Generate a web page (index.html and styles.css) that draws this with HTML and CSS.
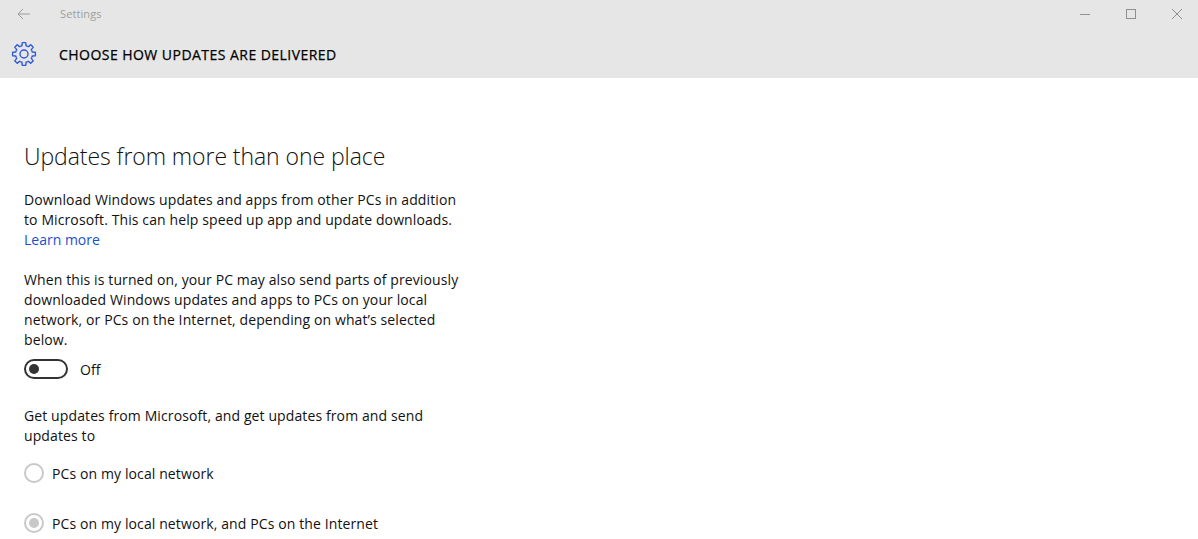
FILE: index.html
```html
<!DOCTYPE html>
<html lang="en">
<head>
<meta charset="utf-8">
<title>Settings</title>
<link rel="stylesheet" href="styles.css">
</head>
<body>
<header class="chrome">
  <div class="titlebar">
    <svg class="back" width="14" height="12" viewBox="0 0 14 12"><path d="M6 1 1 6l5 5M1 6h12" fill="none" stroke="#9a9a9a" stroke-width="1"/></svg>
    <span class="app">Settings</span>
    <div class="winctl">
      <svg width="12" height="12" viewBox="0 0 12 12"><path d="M1 6.5h10" stroke="#8f8f8f" stroke-width="1"/></svg>
      <svg width="12" height="12" viewBox="0 0 12 12"><rect x="1.5" y="1.5" width="9" height="9" fill="none" stroke="#8f8f8f"/></svg>
      <svg width="12" height="12" viewBox="0 0 12 12"><path d="M1 1l10 10M11 1 1 11" stroke="#8f8f8f" stroke-width="1"/></svg>
    </div>
  </div>
  <div class="pagebar">
    <svg class="gear" width="26" height="26" viewBox="-1 -1 26 26">
      <defs><path id="tooth" d="M8.75 4.15 9.94 3.76 10.2 .9Q10.25 .6 10.6 .6H13.4Q13.75 .6 13.8 .9L14.06 3.76 15.25 4.15"/></defs>
      <g fill="none" stroke="#2f5bd7" stroke-width="1.4" stroke-linejoin="round">
        <use href="#tooth"/>
        <use href="#tooth" transform="rotate(45 12 12)"/>
        <use href="#tooth" transform="rotate(90 12 12)"/>
        <use href="#tooth" transform="rotate(135 12 12)"/>
        <use href="#tooth" transform="rotate(180 12 12)"/>
        <use href="#tooth" transform="rotate(225 12 12)"/>
        <use href="#tooth" transform="rotate(270 12 12)"/>
        <use href="#tooth" transform="rotate(315 12 12)"/>
        <circle cx="12" cy="12" r="4"/>
      </g>
    </svg>
    <h1 class="pagetitle">CHOOSE HOW UPDATES ARE DELIVERED</h1>
  </div>
</header>
<main class="content">
  <h2 class="heading">Updates from more than one place</h2>
  <p class="para">Download Windows updates and apps from other PCs in addition<br>to Microsoft. This can help speed up app and update downloads.<br><a class="link" href="#">Learn more</a></p>
  <p class="para second">When this is turned on, your PC may also send parts of previously<br>downloaded Windows updates and apps to PCs on your local<br>network, or PCs on the Internet, depending on what’s selected<br>below.</p>
  <div class="toggle-row">
    <span class="toggle"><span class="knob"></span></span>
    <span class="line">Off</span>
  </div>
  <p class="para third">Get updates from Microsoft, and get updates from and send<br>updates to</p>
  <div class="radios">
    <div class="radio-row"><span class="radio"></span><span class="line">PCs on my local network</span></div>
    <div class="radio-row"><span class="radio checked"></span><span class="line">PCs on my local network, and PCs on the Internet</span></div>
  </div>
</main>
</body>
</html>
```
FILE: styles.css
```css
* { box-sizing: border-box; }
html, body { margin: 0; height: 539px; overflow: hidden; background: #fff; }
body { font-family: "Open Sans", "Noto Sans", sans-serif; color: #111; }
.chrome { background: #e6e6e6; height: 78px; }
.titlebar { height: 28px; display: flex; align-items: center; padding-left: 17px; }
.back { flex: none; }
.app { margin-left: 29px; font-size: 11px; line-height: 16px; letter-spacing: 0.1px; color: #9e9e9e; }
.winctl { margin-left: auto; display: flex; gap: 34px; padding-right: 15px; }
.pagebar { height: 50px; display: flex; align-items: center; padding-left: 11px; padding-top: 2px; }
.gear { flex: none; }
.pagetitle { margin: 0 0 0 22px; font-size: 14px; font-weight: 500; color: #000; letter-spacing: 0.46px; -webkit-text-stroke: 0.25px #000; }
.content { padding: 63px 0 0 24px; }
.heading { margin: 0 0 19px; font-size: 23px; line-height: 30px; font-weight: 300; color: #111; letter-spacing: -0.07px; }
.para { margin: 0; font-size: 14px; line-height: 20px; letter-spacing: 0.11px; }
.second { margin-top: 20px; }
.third { margin-top: 27px; }
.link { color: #1a4fd0; text-decoration: none; letter-spacing: 0; }
.line { font-size: 14px; line-height: 20px; letter-spacing: 0.11px; padding-top: 1px; }
.toggle-row { display: flex; align-items: center; gap: 12px; margin-top: 9px; height: 20px; }
.toggle { width: 44px; height: 20px; border: 2px solid #333; border-radius: 10px; display: flex; align-items: center; padding-left: 3px; }
.knob { width: 10px; height: 10px; border-radius: 50%; background: #333; }
.radios { margin-top: 17px; display: flex; flex-direction: column; gap: 30px; }
.radio-row { display: flex; align-items: center; gap: 8px; height: 20px; }
.radio { width: 20px; height: 20px; border: 2px solid #c8c8c8; border-radius: 50%; display: flex; align-items: center; justify-content: center; }
.radio.checked::after { content: ""; width: 10px; height: 10px; border-radius: 50%; background: #c8c8c8; }
```
